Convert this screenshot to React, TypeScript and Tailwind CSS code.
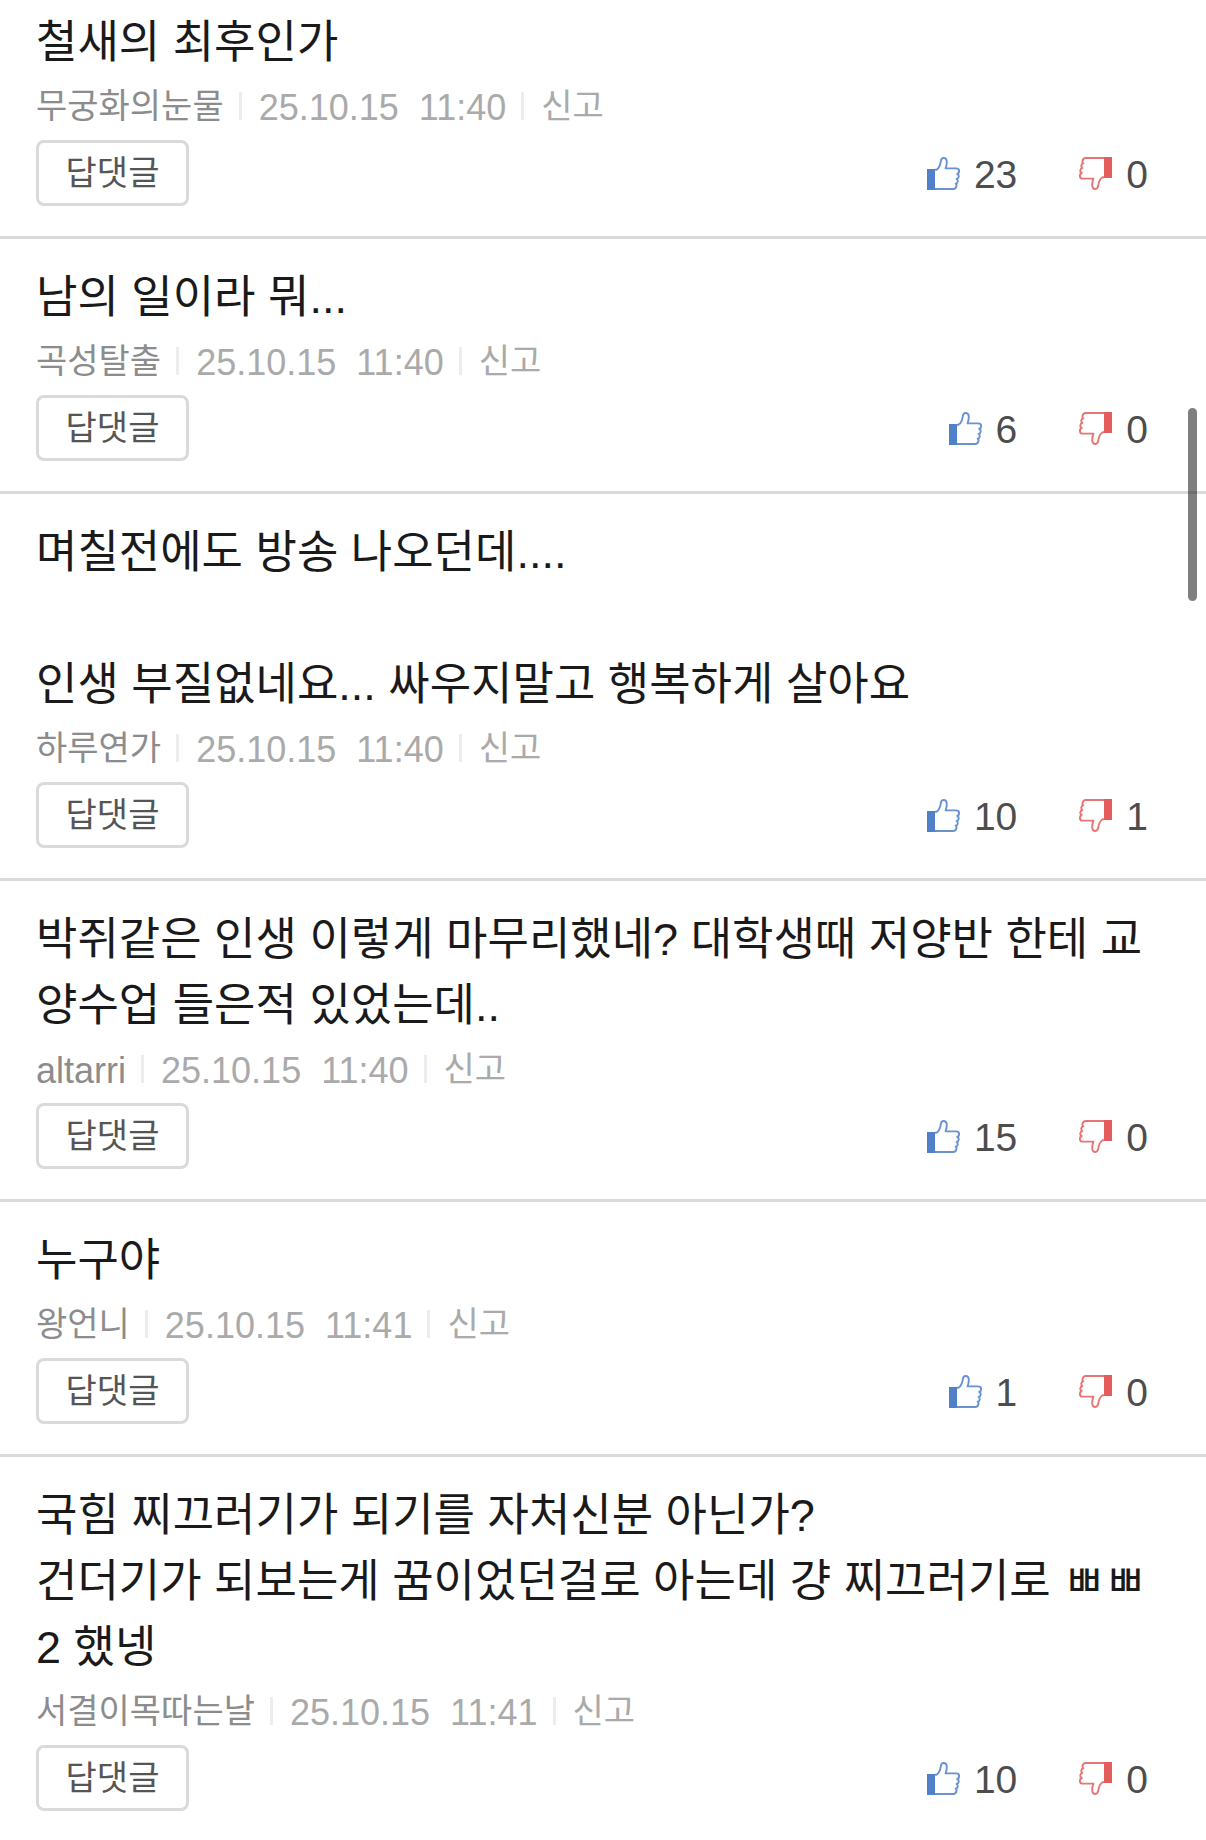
interface Comment {
  id: number
  lines: string[]
  author: string
  time: string
  up: number
  down: number
}

const COMMENTS: Comment[] = [
  { id: 1, lines: ['철새의 최후인가'], author: '무궁화의눈물', time: '11:40', up: 23, down: 0 },
  { id: 2, lines: ['남의 일이라 뭐...'], author: '곡성탈출', time: '11:40', up: 6, down: 0 },
  {
    id: 3,
    lines: ['며칠전에도 방송 나오던데....', '', '인생 부질없네요... 싸우지말고 행복하게 살아요'],
    author: '하루연가',
    time: '11:40',
    up: 10,
    down: 1,
  },
  {
    id: 4,
    lines: ['박쥐같은 인생 이렇게 마무리했네? 대학생때 저양반 한테 교양수업 들은적 있었는데..'],
    author: 'altarri',
    time: '11:40',
    up: 15,
    down: 0,
  },
  { id: 5, lines: ['누구야'], author: '왕언니', time: '11:41', up: 1, down: 0 },
  {
    id: 6,
    lines: ['국힘 찌끄러기가 되기를 자처신분 아닌가?', '건더기가 되보는게 꿈이었던걸로 아는데 걍 찌끄러기로 ㅃㅃ2 했넹'],
    author: '서결이목따는날',
    time: '11:41',
    up: 10,
    down: 0,
  },
]

function ThumbIcon({ className }: { className: string }) {
  return (
    <svg viewBox="0 0 33 33" className={className} aria-hidden="true">
      <path d="M0 12h8v21H0z" fill="currentColor" />
      <path
        d="M8 12.700h1.500c2.500-1.500 3.700-4.500 4.300-8.400C14.200 1.900 15 1 16.500 1c2.200 0 3.300 1.600 3.300 4 0 2.500-.5 4.500-1.200 6.400h10.600c2 0 2.900 1.200 2.900 2.700 0 1.600-.9 2.600-1.900 2.900 1.200.5 1.700 1.500 1.500 2.700-.2 1.300-1 2.100-2.100 2.300 1 .6 1.300 1.500 1.100 2.600-.2 1.200-1 1.900-2 2.100.8.600 1 1.400.8 2.200-.3 2-1.500 3.100-3.400 3.100H8"
        fill="none"
        stroke="currentColor"
        strokeOpacity="0.850"
        strokeWidth="1.900"
        strokeLinejoin="round"
      />
    </svg>
  )
}

function Separator() {
  return <span className="mr-[17px] ml-[15px] h-7 w-[3px] bg-[#ededed]" />
}

function CommentItem({ comment }: { comment: Comment }) {
  // Latin ids look small next to Hangul ones at the same size
  const isLatin = /^[\w.-]+$/.test(comment.author)

  return (
    <li className="border-b-3 border-[#dadada] px-9 pt-[26px] pb-[30px] first:pt-2.5">
      <div className="text-[45px] leading-[66px] break-all text-[#1a1a1a]">
        {comment.lines.map((line, i) => (
          <p key={i} className="min-h-[66px]">{line}</p>
        ))}
      </div>

      <div className="mt-1.5 flex h-12 items-center text-[34px] leading-[48px] text-[#aaaaaa]">
        <span className={isLatin ? 'pt-1 text-[36px] text-[#8c8c8c]' : 'text-[#8c8c8c]'}>{comment.author}</span>
        <Separator />
        <time className="pt-1 text-[36px] whitespace-pre">{`25.10.15  ${comment.time}`}</time>
        <Separator />
        <button type="button">신고</button>
      </div>

      <div className="mt-2.5 flex items-center justify-between">
        <button
          type="button"
          className="h-[66px] w-[153px] rounded-lg border-3 border-[#dadada] text-[34px] leading-[56px] text-[#555555]"
        >
          답댓글
        </button>
        <div className="flex h-[66px] items-center gap-[62px] pr-[22px] text-[39px] leading-[62px] text-[#4d4d4d]">
          <button type="button" aria-label="추천" className="flex items-center gap-3.5">
            <ThumbIcon className="size-[33px] text-[#4f80c8]" />
            <span className="pt-1">{comment.up}</span>
          </button>
          <button type="button" aria-label="비추천" className="flex items-center gap-3.5">
            <ThumbIcon className="size-[33px] rotate-180 text-[#e35d5d]" />
            <span className="pt-1">{comment.down}</span>
          </button>
        </div>
      </div>
    </li>
  )
}

export default function App() {
  return (
    <main className="relative w-full overflow-hidden bg-white font-['Liberation_Sans','Noto_Sans_CJK_KR',sans-serif]">
      <ul>
        {COMMENTS.map((comment) => (
          <CommentItem key={comment.id} comment={comment} />
        ))}
      </ul>
      {/* Overlay scroll thumb */}
      <div className="absolute top-[408px] right-[9px] h-[193px] w-[9px] rounded-full bg-black/50" />
    </main>
  )
}
